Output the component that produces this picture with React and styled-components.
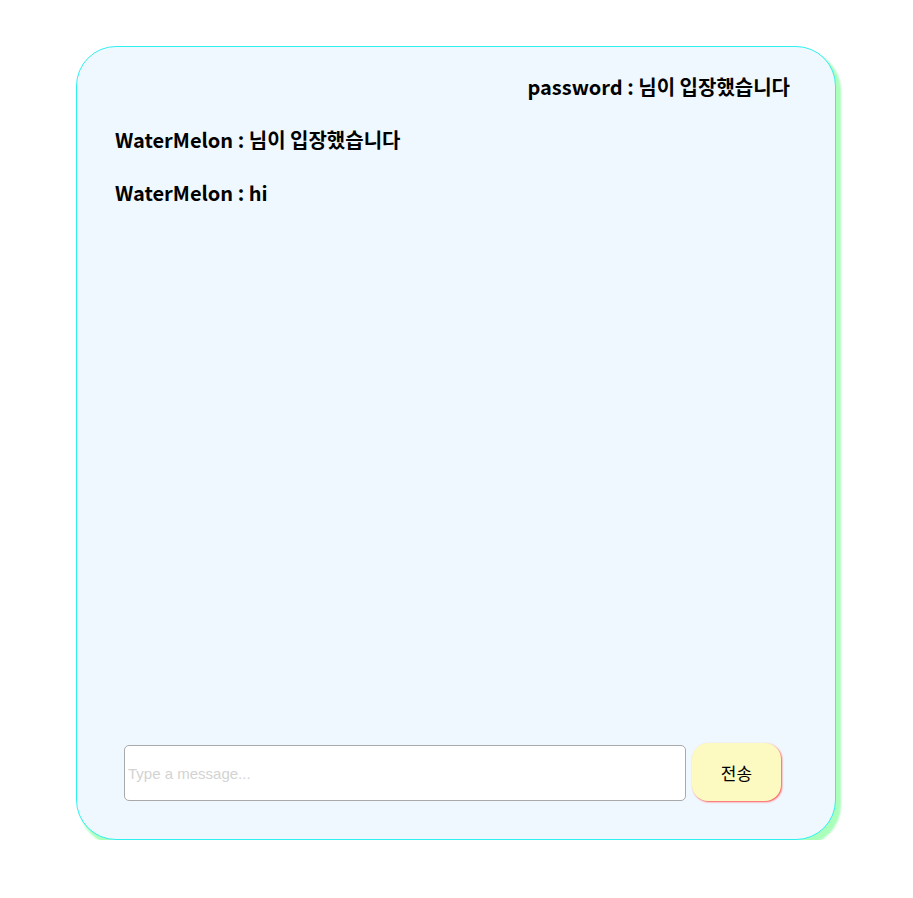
import React from 'react'
import styled, {createGlobalStyle} from 'styled-components'

const GlobalStyle = createGlobalStyle`
  body {
    margin: 0;
    background: #fff;
    font-family: 'Noto Sans CJK KR', 'Noto Sans', sans-serif;
  }
`

const Page = styled.div`
  display: flex;
  padding: 46px 77px 0 76px;
`

const ChatBox = styled.div`
  flex: 1;
  height: 792px;
  display: flex;
  flex-direction: column;
  background-color: #f0f8ff;
  border: 1px solid #2ff0f0;
  border-radius: 40px;
  box-shadow: 4px 5px 2px 1px #aaffbb;
`

const MessageList = styled.div`
  flex: 1;
  display: flex;
  flex-direction: column;
  gap: 23px;
  padding: 25px 45px 0 38px;
`

const Message = styled.div`
  align-self: ${(props) => (props.mine ? 'flex-end' : 'flex-start')};
  color: #000;
  font-size: 20px;
  font-weight: 700;
  line-height: 30px;
`

const InputRow = styled.form`
  display: flex;
  align-items: flex-end;
  gap: 6px;
  padding: 0 54px 38px 47px;
`

const MessageInput = styled.input`
  flex: 1;
  box-sizing: border-box;
  height: 56px;
  padding: 0 3px;
  background: #fff;
  border: 1px solid #a9a9a9;
  border-radius: 5px;
  font-family: 'Liberation Sans', Arial, sans-serif;
  font-size: 15px;
  outline: none;

  &::placeholder {
    color: #d3d3d3;
  }
`

const SendButton = styled.button`
  width: 89px;
  height: 58px;
  background-color: #fcfac0;
  border: none;
  border-radius: 16px;
  box-shadow: 1px 1px 2px #ff5555;
  color: #000;
  font-family: 'Noto Sans CJK KR', sans-serif;
  font-size: 17px;
  cursor: pointer;
`

const messages = [
  {user: 'password', text: '님이 입장했습니다', mine: true},
  {user: 'WaterMelon', text: '님이 입장했습니다', mine: false},
  {user: 'WaterMelon', text: 'hi', mine: false}
]

const App = () => (
  <Page>
    <GlobalStyle />
    <ChatBox>
      <MessageList>
        {messages.map((msg, i) => (
          <Message key={i} mine={msg.mine}>
            {msg.user} : {msg.text}
          </Message>
        ))}
      </MessageList>
      <InputRow onSubmit={(e) => e.preventDefault()}>
        <MessageInput placeholder='Type a message...' />
        <SendButton type='submit'>전송</SendButton>
      </InputRow>
    </ChatBox>
  </Page>
)

export default App
